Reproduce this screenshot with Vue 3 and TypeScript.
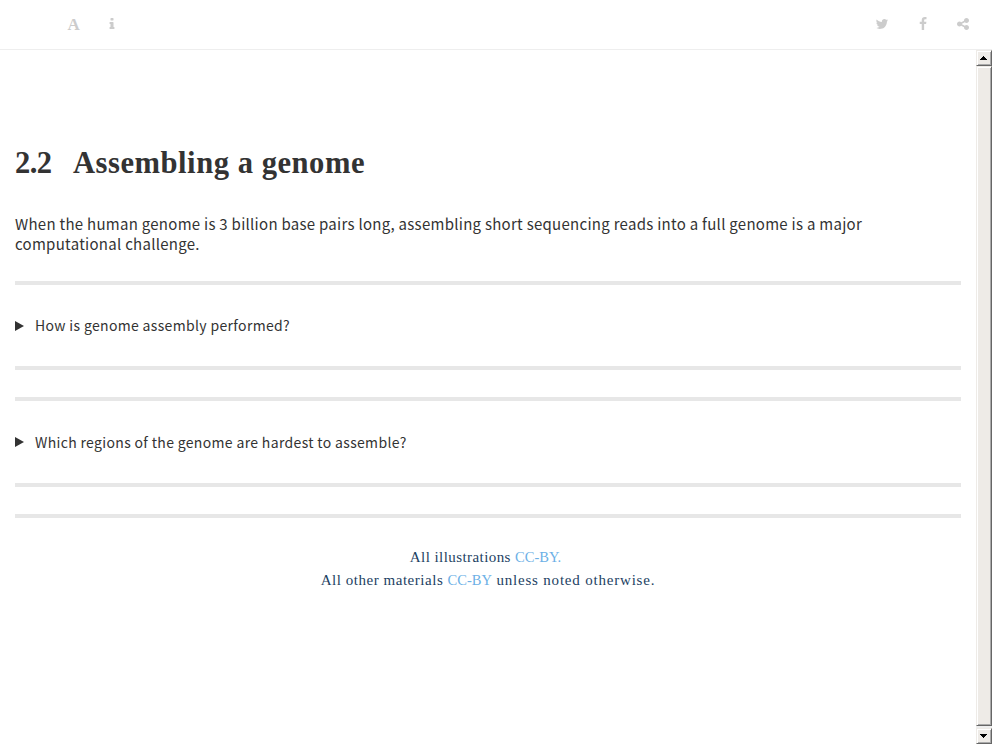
<script setup lang="ts">
interface Question {
  id: number
  text: string
}

const questions: Question[] = [
  { id: 1, text: 'How is genome assembly performed?' },
  { id: 2, text: 'Which regions of the genome are hardest to assemble?' },
]
</script>

<template>
  <div class="book">
    <header class="toolbar">
      <div class="tools">
        <span class="font-tool">A</span>
        <svg class="icon" viewBox="0 0 1792 1792"><path d="M1216 1344v128q0 26-19 45t-45 19h-512q-26 0-45-19t-19-45v-128q0-26 19-45t45-19h64v-384h-64q-26 0-45-19t-19-45v-128q0-26 19-45t45-19h384q26 0 45 19t19 45v576h64q26 0 45 19t19 45zm-128-1152v192q0 26-19 45t-45 19h-256q-26 0-45-19t-19-45v-192q0-26 19-45t45-19h256q26 0 45 19t19 45z" /></svg>
      </div>
      <div class="share">
        <svg class="icon" viewBox="0 0 1792 1792"><path d="M1684 408q-67 98-162 167 1 14 1 42 0 130-38 259.5t-115.5 248.5-184.5 210.5-258 146-323 54.5q-271 0-496-145 35 4 78 4 225 0 401-138-105-2-188-64.5t-114-159.5q33 5 61 5 43 0 85-11-112-23-185.5-111.5t-73.5-205.5v-4q68 38 146 41-66-44-105-115t-39-154q0-88 44-163 121 149 294.5 238.5t371.5 99.5q-8-38-8-74 0-134 94.5-228.5t228.5-94.5q140 0 236 102 109-21 205-78-37 115-142 178 93-10 186-50z" /></svg>
        <svg class="icon" viewBox="0 0 1792 1792"><path d="M1343 12v264h-157q-86 0-116 36t-30 108v189h293l-39 296h-254v759h-306v-759h-255v-296h255v-218q0-186 104-288.5t277-102.5q147 0 228 12z" /></svg>
        <svg class="icon" viewBox="0 0 1792 1792"><path d="M1344 1024q133 0 226.5 93.5t93.5 226.5-93.5 226.5-226.5 93.5-226.5-93.5-93.5-226.5q0-12 2-34l-360-180q-92 86-218 86-133 0-226.5-93.5t-93.5-226.5 93.5-226.5 226.5-93.5q126 0 218 86l360-180q-2-22-2-34 0-133 93.5-226.5t226.5-93.5 226.5 93.5 93.5 226.5-93.5 226.5-226.5 93.5q-126 0-218-86l-360 180q2 22 2 34t-2 34l360 180q92-86 218-86z" /></svg>
      </div>
    </header>
    <div class="body">
      <main class="page">
        <h1><span class="number">2.2</span><span class="title">Assembling a genome</span></h1>
        <p class="intro">When the human genome is 3 billion base pairs long, assembling short sequencing reads into a full genome is a major<br>computational challenge.</p>
        <hr>
        <template v-for="q in questions" :key="q.id">
          <div class="question">
            <svg class="marker" viewBox="0 0 9 10"><path d="M0 0L9 5L0 10Z" /></svg>
            <span class="label">{{ q.text }}</span>
          </div>
          <hr>
          <hr class="second">
        </template>
        <footer>
          <div class="line first">All illustrations <a>CC-BY.</a></div>
          <div class="line">All other materials <a>CC-BY</a><span class="tail"> unless noted otherwise.</span></div>
        </footer>
      </main>
      <div class="scrollbar">
        <div class="button"><svg viewBox="0 0 7 4"><path d="M3 0h1v1h1v1h1v1h1v1h-7v-1h1v-1h1v-1h1z" /></svg></div>
        <div class="thumb"></div>
        <div class="gap"></div>
        <div class="button"><svg viewBox="0 0 7 4"><path d="M0 0h7v1h-1v1h-1v1h-1v1h-1v-1h-1v-1h-1v-1h-1z" /></svg></div>
      </div>
    </div>
  </div>
</template>

<style>
body { background: #fff; overflow: hidden; }
</style>

<style scoped>
.book { display: flex; flex-direction: column; width: 992px; height: 744px; color: #333; }
.toolbar { box-sizing: border-box; height: 50px; flex: none; display: flex; justify-content: space-between; border-bottom: 1px solid #eee; padding: 17px 22px 0 67.5px; }
.tools, .share { display: flex; align-items: flex-start; }
.tools { gap: 25.5px; }
.share { gap: 26px; }
.icon { width: 14px; height: 14px; fill: #ccc; display: block; }
.share .icon:first-child { margin-right: 1px; }
.font-tool { width: 12px; font: bold 17px/15px "Liberation Serif", serif; color: #ccc; }
.body { flex: 1; display: flex; min-height: 0; }
.page { box-sizing: border-box; width: 976px; padding: 93px 15px 0; }
h1 { margin: 0; display: flex; font: bold 30.6px/40px "Liberation Serif", serif; white-space: nowrap; }
.number { width: 58px; letter-spacing: -0.6px; }
.title { letter-spacing: 0.52px; }
.intro { margin: 31px 0 0; height: 67px; font: 15px/20px "Noto Sans CJK SC", sans-serif; letter-spacing: 0.277px; white-space: nowrap; }
hr { height: 4px; margin: 0; border: 0; background: #e7e7e7; }
hr.second { margin-top: 27px; }
.question { height: 81px; display: flex; align-items: center; gap: 11px; font: 14px/20px "Noto Sans CJK SC", sans-serif; letter-spacing: 0.34px; white-space: nowrap; }
.question:not(:first-of-type) { height: 82px; }
.question:first-of-type .label { margin-bottom: 1px; }
.marker { width: 9px; height: 10px; fill: #333; }
footer { padding-top: 28px; text-align: center; font: 15px/23px "Liberation Serif", serif; color: #1d3f63; white-space: nowrap; }
.line { letter-spacing: 0.53px; }
.line.first { padding-right: 5px; letter-spacing: 0.43px; }
.tail { letter-spacing: 0.8px; }
a { color: #6cb0e6; font-size: 14.5px; letter-spacing: 0; }
.scrollbar { width: 16px; flex: none; display: flex; flex-direction: column; background: #eee; }
.button { box-sizing: border-box; width: 16px; height: 16px; padding-right: 1px; flex: none; display: flex; align-items: center; justify-content: center; background: #eeebe7; border: 1px solid; border-color: #eeebe7 #666 #666 #eeebe7; box-shadow: inset 1px 1px #fff, inset -1px -1px #aaa; }
.button svg { width: 7px; height: 4px; display: block; }
.thumb { flex: 1; box-sizing: border-box; background: #eeebe7; border: 1px solid; border-color: #eeebe7 #666 #666 #eeebe7; box-shadow: inset 1px 1px #fff, inset -1px -1px #aaa; }
.gap { height: 2px; }
</style>
